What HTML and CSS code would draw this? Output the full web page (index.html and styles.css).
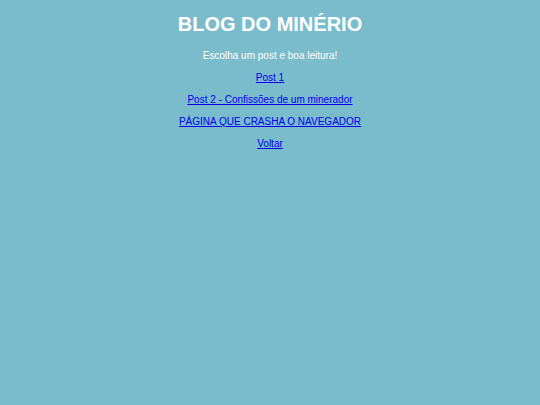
FILE: index.html
```html
<!DOCTYPE html>
<html lang="pt-BR">
<head>
<meta charset="utf-8">
<title>Blog do Minério</title>
<link rel="stylesheet" href="styles.css">
</head>
<body>
<main class="page">
<h1 class="title">BLOG DO MINÉRIO</h1>
<p class="intro">Escolha um post e boa leitura!</p>
<p class="item"><a href="#">Post 1</a></p>
<p class="item"><a href="#">Post 2 - Confissões de um minerador</a></p>
<p class="item"><a href="#">PÁGINA QUE CRASHA O NAVEGADOR</a></p>
<p class="item"><a href="#">Voltar</a></p>
</main>
</body>
</html>
```
FILE: styles.css
```css
html, body {
  background: #7abccc;
}
body {
  margin: 0;
  font-family: "Liberation Sans", Arial, sans-serif;
  font-size: 10px;
  line-height: 12px;
  color: #ffffff;
}
.page {
  text-align: center;
  padding: 13px 8px;
}
.title {
  font-size: 20px;
  line-height: 23px;
  font-weight: bold;
  margin: 0 0 14px;
}
.intro,
.item {
  margin: 10px 0;
}
.item a {
  color: #0000ee;
}
```
